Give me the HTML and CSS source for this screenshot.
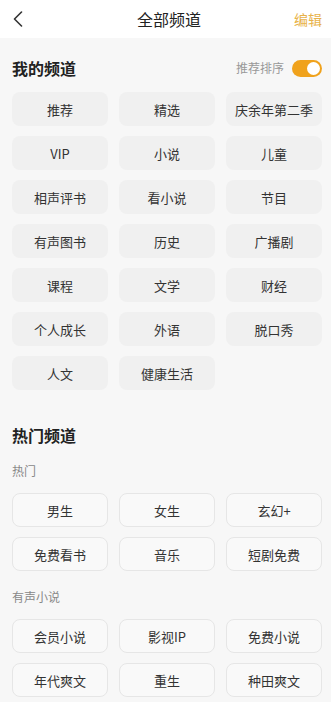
FILE: index.html
```html
<!DOCTYPE html>
<html lang="zh-CN">
<head>
<meta charset="utf-8">
<title>全部频道</title>
<link rel="stylesheet" href="styles.css">
</head>
<body>
<header class="topbar">
  <span class="back">
    <svg width="12" height="16" viewBox="0 0 12 16"><path d="M9.5 1 L2.5 8 L9.5 15" fill="none" stroke="#333" stroke-width="1.6" stroke-linecap="round" stroke-linejoin="round"/></svg>
  </span>
  <h1 class="title">全部频道</h1>
  <span class="edit">编辑</span>
</header>
<main class="page">
  <section class="mine">
    <div class="sec-head">
      <h2 class="sec-title">我的频道</h2>
      <div class="sort">
        <span class="sort-label">推荐排序</span>
        <span class="switch"><span class="knob"></span></span>
      </div>
    </div>
    <div class="grid">
      <div class="chip">推荐</div>
      <div class="chip">精选</div>
      <div class="chip">庆余年第二季</div>
      <div class="chip">VIP</div>
      <div class="chip">小说</div>
      <div class="chip">儿童</div>
      <div class="chip">相声评书</div>
      <div class="chip">看小说</div>
      <div class="chip">节目</div>
      <div class="chip">有声图书</div>
      <div class="chip">历史</div>
      <div class="chip">广播剧</div>
      <div class="chip">课程</div>
      <div class="chip">文学</div>
      <div class="chip">财经</div>
      <div class="chip">个人成长</div>
      <div class="chip">外语</div>
      <div class="chip">脱口秀</div>
      <div class="chip">人文</div>
      <div class="chip">健康生活</div>
    </div>
  </section>
  <section class="hot">
    <div class="sec-head">
      <h2 class="sec-title">热门频道</h2>
    </div>
    <div class="group-label">热门</div>
    <div class="grid">
      <div class="chip outline">男生</div>
      <div class="chip outline">女生</div>
      <div class="chip outline">玄幻+</div>
      <div class="chip outline">免费看书</div>
      <div class="chip outline">音乐</div>
      <div class="chip outline">短剧免费</div>
    </div>
    <div class="group-label second">有声小说</div>
    <div class="grid">
      <div class="chip outline">会员小说</div>
      <div class="chip outline">影视IP</div>
      <div class="chip outline">免费小说</div>
      <div class="chip outline">年代爽文</div>
      <div class="chip outline">重生</div>
      <div class="chip outline">种田爽文</div>
    </div>
  </section>
</main>
</body>
</html>
```

FILE: styles.css
```css
* { box-sizing: border-box; }
html, body {
  margin: 0;
  padding: 0;
  background: #f7f7f7;
  font-family: "Noto Sans CJK SC", "Noto Sans", Roboto, sans-serif;
  color: #333;
  overflow: hidden;
}
.topbar {
  height: 38px;
  background: #fff;
  display: flex;
  align-items: center;
  justify-content: space-between;
  padding: 0 9px 0 12px;
  position: relative;
}
.back {
  display: flex;
  width: 14px;
  height: 16px;
  align-items: center;
}
.title {
  margin: 0;
  font-size: 16px;
  font-weight: 400;
  color: #222;
  line-height: 20px;
  flex: 1;
  text-align: center;
  padding-left: 18px;
}
.edit {
  font-size: 14px;
  color: #e8b24a;
  line-height: 20px;
}
.page {
  padding: 18px 9px 0 12px;
}
.sec-head {
  height: 24px;
  display: flex;
  align-items: center;
  justify-content: space-between;
}
.sec-title {
  margin: 0;
  font-size: 16px;
  font-weight: 700;
  color: #222;
  line-height: 24px;
}
.sort {
  display: flex;
  align-items: center;
  gap: 8px;
}
.sort-label {
  font-size: 12px;
  color: #999;
  line-height: 16px;
}
.switch {
  width: 30px;
  height: 17px;
  border-radius: 9px;
  background: #f0a21c;
  display: flex;
  align-items: center;
  justify-content: flex-end;
  padding: 0 2px;
}
.knob {
  width: 13px;
  height: 13px;
  border-radius: 50%;
  background: #fff;
}
.grid {
  margin-top: 12px;
  display: grid;
  grid-template-columns: repeat(3, 1fr);
  column-gap: 11px;
  row-gap: 10px;
}
.chip {
  height: 34px;
  border-radius: 8px;
  background: #f0f0f0;
  display: flex;
  align-items: center;
  justify-content: center;
  font-size: 13px;
  color: #333;
}
.chip.outline {
  background: #f9f9f9;
  border: 1px solid #e6e6e6;
}
.hot {
  margin-top: 33px;
}
.group-label {
  margin-top: 14px;
  font-size: 12px;
  line-height: 20px;
  color: #888;
}
.group-label.second {
  margin-top: 16px;
}
```
